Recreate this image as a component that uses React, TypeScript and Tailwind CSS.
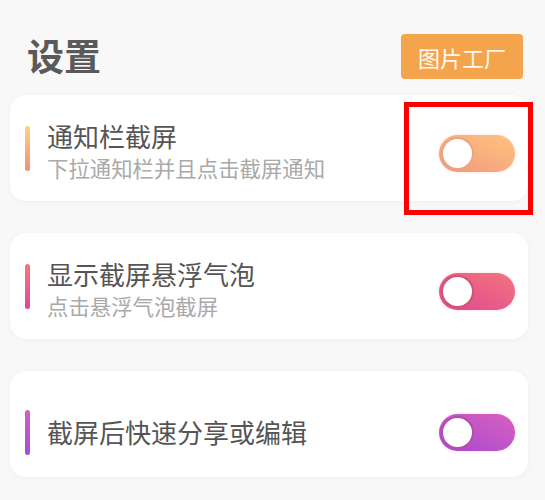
import React from 'react';

interface Item {
  title: string;
  desc?: string;
  bar: string;
  track: string;
  knob: string;
}

const items: Item[] = [
  {
    title: '通知栏截屏',
    desc: '下拉通知栏并且点击截屏通知',
    bar: 'bg-gradient-to-b from-[#fcd47c] to-[#ef8f7c]',
    track: 'bg-gradient-to-bl from-[#ffc47e] to-[#f0967e]',
    knob: 'border-[#eba47f]',
  },
  {
    title: '显示截屏悬浮气泡',
    desc: '点击悬浮气泡截屏',
    bar: 'bg-gradient-to-b from-[#f2787e] to-[#d9479f]',
    track: 'bg-gradient-to-bl from-[#f3737a] to-[#df4694]',
    knob: 'border-[#d1546f]',
  },
  {
    title: '截屏后快速分享或编辑',
    bar: 'bg-gradient-to-b from-[#d35fc1] to-[#a44fd2]',
    track: 'bg-gradient-to-bl from-[#d95fbd] to-[#a846d2]',
    knob: 'border-[#b64da8]',
  },
];

function Toggle({ item }: { item: Item }) {
  return (
    <div className={`w-[76px] h-[37px] rounded-full p-[2px] flex items-center shadow-[0_0_3px_rgba(240,150,150,0.35)] ${item.track}`}>
      <div className={`w-[33px] h-[33px] rounded-full bg-white border-[2px] ${item.knob}`} />
    </div>
  );
}

export default function App() {
  return (
    <div
      className="relative w-[545px] h-[500px] overflow-hidden bg-[#f8f8f8] pl-[10px] pr-[17px]"
      style={{ fontFamily: '"Noto Sans CJK SC", "Noto Sans", sans-serif' }}
    >
      {/* Header */}
      <div className="flex items-center justify-between pl-[17px] pr-[5px] pt-[34px] h-[79px]">
        <h1 className="text-[37px] leading-none font-bold text-[#5a5a5a] -mt-[2px]">设置</h1>
        <button className="w-[122px] h-[45px] rounded-[4px] bg-[#f5a44e] text-[#fff8ee] text-[22px] leading-none">
          图片工厂
        </button>
      </div>

      {/* Cards */}
      <div className="flex flex-col gap-[32px] mt-[16px]">
        {items.map((item) => (
          <div
            key={item.title}
            className={`h-[106px] bg-white rounded-[16px] shadow-[0_1px_6px_rgba(0,0,0,0.04)] flex items-center pl-[15px] pr-[13px] ${item.desc ? '' : 'pt-[16px]'}`}
          >
            <div className={`w-[5px] h-[45px] rounded-full ${item.bar}`} />
            <div className={`flex-1 ml-[17px] flex flex-col ${item.desc ? 'pt-[6px]' : ''}`}>
              <div className="text-[26px] leading-[32px] text-[#555555]">{item.title}</div>
              {item.desc && (
                <div className="text-[21.4px] leading-[28px] mt-[2px] text-[#a9a9a9]">{item.desc}</div>
              )}
            </div>
            <div className={item.desc ? 'mt-[10px]' : ''}>
              <Toggle item={item} />
            </div>
          </div>
        ))}
      </div>

      {/* highlight annotation */}
      <div className="absolute left-[404px] top-[102px] w-[129px] h-[113px] border-[5px] border-[#ff0000]" />
    </div>
  );
}
